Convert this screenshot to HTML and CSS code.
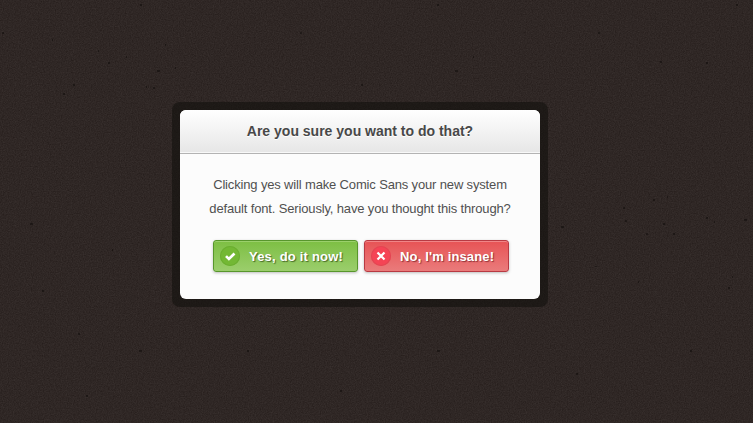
FILE: index.html
```html
<!DOCTYPE html>
<html lang="en">
<head>
<meta charset="utf-8">
<title>Confirm</title>
<link rel="stylesheet" href="styles.css">
</head>
<body>
<svg class="texture" width="753" height="423" aria-hidden="true">
  <filter id="grain" x="0" y="0" width="100%" height="100%" color-interpolation-filters="sRGB">
    <feTurbulence type="fractalNoise" baseFrequency="0.83" numOctaves="3" seed="4"/>
    <feColorMatrix values="0.09 0 0 0 0.14  0.09 0 0 0 0.108  0.09 0 0 0 0.1  0 0 0 0 1"/>
  </filter>
  <rect width="753" height="423" filter="url(#grain)"/>
  <path class="specks" d="M140 5h2M3 32v2M52 40h1M98 51h1M165 45h1M126 57h1M108 63h2M157 71h3M175 68h1M63 94h2M73 85h2M153 88h2M146 87h1M624 207v2M625 221h2M667 197h1M706 218h2M714 222h1M673 234h2M647 233v2M732 277h1M728 288h2M561 227h3M744 220h3M638 282h1M653 200h2M663 224h2M596 266v1M139 351h3M78 334h2M42 291h2M30 224h3M112 250h1M247 351h2M437 351h3M455 71h3M361 85h2M473 57h1M301 32v2M599 32v2M437 5h2M736 5h2M660 62h2M706 63h2M340 391h2M576 374h2M690 351h2M86 396h2"/>
</svg>
<main class="dialog" role="dialog" aria-labelledby="title">
  <div class="panel">
    <h1 class="title" id="title"><span>Are you sure you want to do that?</span></h1>
    <div class="content">
      <p class="message">Clicking yes will make Comic Sans your new system<br>default font. Seriously, have you thought this through?</p>
      <div class="actions">
        <button class="button yes"><span class="badge"><svg width="12" height="12" viewBox="0 0 12 12"><path d="M2 6.1 4.9 8.9 10.5 3.5"/></svg></span><span class="label">Yes, do it now!</span></button>
        <button class="button no"><span class="badge"><svg width="12" height="12" viewBox="0 0 12 12"><path d="M2.5 2.5 9.5 9.5M9.5 2.5 2.5 9.5"/></svg></span><span class="label">No, I'm insane!</span></button>
      </div>
    </div>
  </div>
</main>
</body>
</html>
```

FILE: styles.css
```css
* { box-sizing: border-box; }
body {
  margin: 0;
  height: 423px;
  padding: 102px 0 0 172px;
  overflow: hidden;
  background: #2f2624;
  font-family: "Liberation Sans", Arial, sans-serif;
}
.texture { position: absolute; top: 0; left: 0; z-index: -1; }
.specks { stroke: #120d0c; stroke-width: 1.4; stroke-opacity: .75; fill: none; }
.dialog {
  width: 376px;
  height: 205px;
  padding: 8px;
  border-radius: 8px;
  background: rgba(18, 17, 13, .6);
}
.panel {
  height: 189px;
  border-radius: 6px;
  overflow: hidden;
  background: #fcfcfc;
}
.title {
  height: 44px;
  margin: 0;
  border-bottom: 1px solid #b3b3b3;
  box-shadow: inset 0 -1px #f8f8f8;
  background: linear-gradient(#fff, #e6e6e6);
  color: #484848;
  text-align: center;
  font-size: 14px;
  line-height: 43px;
  text-shadow: 0 1px #fff;
}
.content { padding-top: 19px; }
.message {
  margin: 0;
  color: #505050;
  text-align: center;
  font-size: 13px;
  line-height: 24px;
  letter-spacing: -.155px;
  white-space: nowrap;
}
.actions { display: flex; gap: 6px; margin: 19px 0 0 33px; }
.button {
  display: flex;
  align-items: center;
  width: 145px;
  height: 32px;
  padding: 0 0 0 6px;
  border: 1px solid;
  border-radius: 3px;
  color: #fff;
  font: bold 13px/18px "Liberation Sans", Arial, sans-serif;
  letter-spacing: .2px;
  white-space: nowrap;
}
.label { padding-top: 1px; }
.yes {
  border-color: #58962c;
  background: linear-gradient(#7dbf43, #9bce6c);
  box-shadow: inset 0 1px #9bd06b, 0 1px 3px rgba(0, 0, 0, .25);
  text-shadow: 1px 1px 1px rgba(50, 80, 25, .8);
}
.no {
  border-color: #b83a43;
  background: linear-gradient(#e75355, #ea7b7b);
  box-shadow: inset 0 1px #f08587, 0 1px 3px rgba(0, 0, 0, .25);
  text-shadow: 1px 1px 1px rgba(120, 35, 40, .8);
  letter-spacing: .15px;
}
.badge {
  display: flex;
  align-items: center;
  justify-content: center;
  width: 20px;
  height: 20px;
  margin-right: 9px;
  border-radius: 50%;
}
.yes .badge { background: #73b834; box-shadow: inset 0 0 0 1px #6bae31; }
.no .badge { background: #f54455; box-shadow: inset 0 0 0 1px #e24652; }
.badge path { fill: none; stroke: #fff; stroke-width: 2.7; }
.no .badge path { stroke-width: 2.2; }
```
